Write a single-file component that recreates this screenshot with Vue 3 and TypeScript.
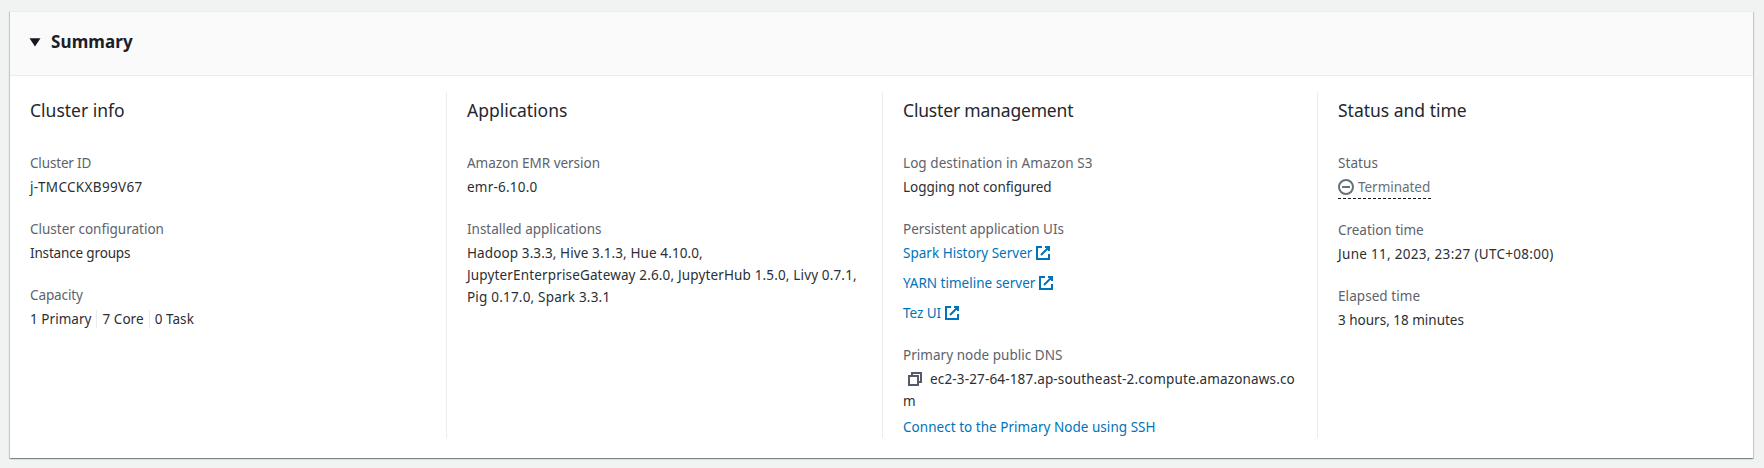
<script setup lang="ts">
interface Text {
  text: string
  tracking: number
}

interface Field {
  label: Text
  kind: 'text' | 'parts' | 'links' | 'dns' | 'status'
  values: Text[]
}

interface Section {
  title: Text
  fields: Field[]
}

const t = (text: string, tracking: number): Text => ({ text, tracking })
const track = (item: Text) => ({ letterSpacing: `${item.tracking}px` })

const sections: Section[] = [
  {
    title: t('Cluster info', 0.0),
    fields: [
      { label: t('Cluster ID', -0.16), kind: 'text', values: [t('j-TMCCKXB99V67', 0.34)] },
      { label: t('Cluster configuration', 0), kind: 'text', values: [t('Instance groups', -0.16)] },
      {
        label: t('Capacity', -0.11),
        kind: 'parts',
        values: [t('1 Primary', 0.04), t('7 Core', 0.05), t('0 Task', 0.06)],
      },
    ],
  },
  {
    title: t('Applications', -0.02),
    fields: [
      { label: t('Amazon EMR version', -0.02), kind: 'text', values: [t('emr-6.10.0', 0.22)] },
      {
        label: t('Installed applications', -0.01),
        kind: 'text',
        values: [
          t('Hadoop 3.3.3, Hive 3.1.3, Hue 4.10.0,', 0.11),
          t('JupyterEnterpriseGateway 2.6.0, JupyterHub 1.5.0, Livy 0.7.1,', 0.15),
          t('Pig 0.17.0, Spark 3.3.1', 0.2),
        ],
      },
    ],
  },
  {
    title: t('Cluster management', -0.18),
    fields: [
      {
        label: t('Log destination in Amazon S3', 0.06),
        kind: 'text',
        values: [t('Logging not configured', -0.04)],
      },
      {
        label: t('Persistent application UIs', -0.02),
        kind: 'links',
        values: [t('Spark History Server', 0.01), t('YARN timeline server', 0), t('Tez UI', -0.05)],
      },
      {
        label: t('Primary node public DNS', 0.03),
        kind: 'dns',
        values: [
          t('ec2-3-27-64-187.ap-southeast-2.compute.amazonaws.co', 0.16),
          t('m', 0),
          t('Connect to the Primary Node using SSH', 0.035),
        ],
      },
    ],
  },
  {
    title: t('Status and time', -0.01),
    fields: [
      { label: t('Status', 0.085), kind: 'status', values: [t('Terminated', -0.04)] },
      {
        label: t('Creation time', -0.03),
        kind: 'text',
        values: [t('June 11, 2023, 23:27 (UTC+08:00)', 0.3)],
      },
      { label: t('Elapsed time', 0.07), kind: 'text', values: [t('3 hours, 18 minutes', 0)] },
    ],
  },
]
</script>

<template>
  <main class="page">
    <section class="panel">
      <header class="panel-header">
        <svg class="caret" width="16" height="16" viewBox="0 0 16 16">
          <path d="M4 5h8l-4 6z" />
        </svg>
        <h2 class="panel-title">Summary</h2>
      </header>

      <div class="columns">
        <div v-for="section in sections" :key="section.title.text" class="column">
          <h3 class="column-title" :style="track(section.title)">{{ section.title.text }}</h3>
          <div class="fields">
            <div v-for="field in section.fields" :key="field.label.text" class="field">
              <div class="label"><span :style="track(field.label)">{{ field.label.text }}</span></div>

              <div v-if="field.kind === 'text'" class="value">
                <div v-for="v in field.values" :key="v.text" :style="track(v)">{{ v.text }}</div>
              </div>

              <div v-else-if="field.kind === 'parts'" class="value parts">
                <span v-for="v in field.values" :key="v.text" class="part" :style="track(v)">{{ v.text }}</span>
              </div>

              <div v-else-if="field.kind === 'links'" class="value links">
                <a v-for="v in field.values" :key="v.text" class="link">
                  <span :style="track(v)">{{ v.text }}</span>
                  <svg class="icon" width="16" height="16" viewBox="0 0 16 16">
                    <path d="M10 2h4v4M6 10l8-8M14 9.048V14H2V2h5" />
                  </svg>
                </a>
              </div>

              <div v-else-if="field.kind === 'dns'" class="value">
                <div class="dns">
                  <svg class="icon copy" width="16" height="16" viewBox="0 0 16 16">
                    <path d="M2 5h9v9H2zM5 5V2h9v9h-3" />
                  </svg>
                  <span :style="track(field.values[0])">{{ field.values[0].text }}</span>
                </div>
                <div>{{ field.values[1].text }}</div>
                <a class="link ssh" :style="track(field.values[2])">{{ field.values[2].text }}</a>
              </div>

              <div v-else class="value status">
                <svg class="icon" width="16" height="16" viewBox="0 0 16 16">
                  <circle cx="8" cy="8" r="7" />
                  <path d="M4 8h8" />
                </svg>
                <span :style="track(field.values[0])">{{ field.values[0].text }}</span>
              </div>
            </div>
          </div>
        </div>
      </div>
    </section>
  </main>
</template>

<style>
body {
  background: #f1f3f3;
}
</style>

<style scoped>
.page {
  box-sizing: border-box;
  height: 468px;
  padding: 11px 11px 10px 10px;
  background: #f1f3f3;
  color: #2b2f35;
  font-family: 'Noto Sans', 'Open Sans', sans-serif;
  font-size: 13.5px;
  line-height: 22px;
  white-space: nowrap;
}

.panel {
  box-sizing: border-box;
  height: 447px;
  background: #fff;
  border-top: 1px solid #eaeded;
  box-shadow: 0 1px 1px 0 rgba(0, 28, 36, 0.3), 1px 1px 1px 0 rgba(0, 28, 36, 0.15),
    -1px 1px 1px 0 rgba(0, 28, 36, 0.15);
}

.panel-header {
  display: flex;
  align-items: center;
  box-sizing: border-box;
  height: 64px;
  padding: 0 17px 3px;
  background: #fafafa;
  border-bottom: 1px solid #eaeded;
}

.caret {
  fill: #16191f;
  stroke: #16191f;
  stroke-width: 1.6;
}

.panel-title {
  margin: 0 0 0 8px;
  color: #1c2026;
  font-size: 17px;
  font-weight: 700;
  line-height: 22px;
  letter-spacing: 0.11px;
}

.columns {
  display: grid;
  grid-template-columns: 437px 436px 435px 435px;
  height: 346px;
  margin-top: 16px;
}

.column {
  box-sizing: border-box;
  padding: 7px 19px 0 20px;
  border-right: 1px solid #eaeded;
}

.column:last-child {
  border-right: 0;
}

.column-title {
  margin: 0 0 31px;
  color: #24282e;
  font-size: 17.5px;
  font-weight: 400;
  line-height: 22px;
}

.fields {
  display: flex;
  flex-direction: column;
  gap: 20px;
}

.label {
  margin-bottom: 2px;
  color: #5c636c;
}

.parts {
  display: flex;
  align-items: center;
}

.part + .part {
  margin-left: 5px;
  padding-left: 5px;
  border-left: 1px solid #eaeded;
  line-height: 18px;
}

.links {
  display: flex;
  flex-direction: column;
  gap: 8px;
}

.link {
  display: flex;
  align-items: center;
  gap: 3px;
  color: #0073bb;
}

.ssh {
  margin-top: 4px;
}

.icon {
  flex: none;
  fill: none;
  stroke: currentColor;
  stroke-width: 2;
}

.dns {
  display: flex;
  align-items: center;
}

.copy {
  margin: 0 7px 0 4px;
  color: #545b64;
}

.status {
  display: flex;
  align-items: center;
  gap: 4px;
  box-sizing: border-box;
  width: 93px;
  height: 23px;
  padding-bottom: 1px;
  background: repeating-linear-gradient(90deg, #16191f 0 3px, transparent 3px 5px) left bottom / 100% 1px
    no-repeat;
  color: #687078;
}
</style>
